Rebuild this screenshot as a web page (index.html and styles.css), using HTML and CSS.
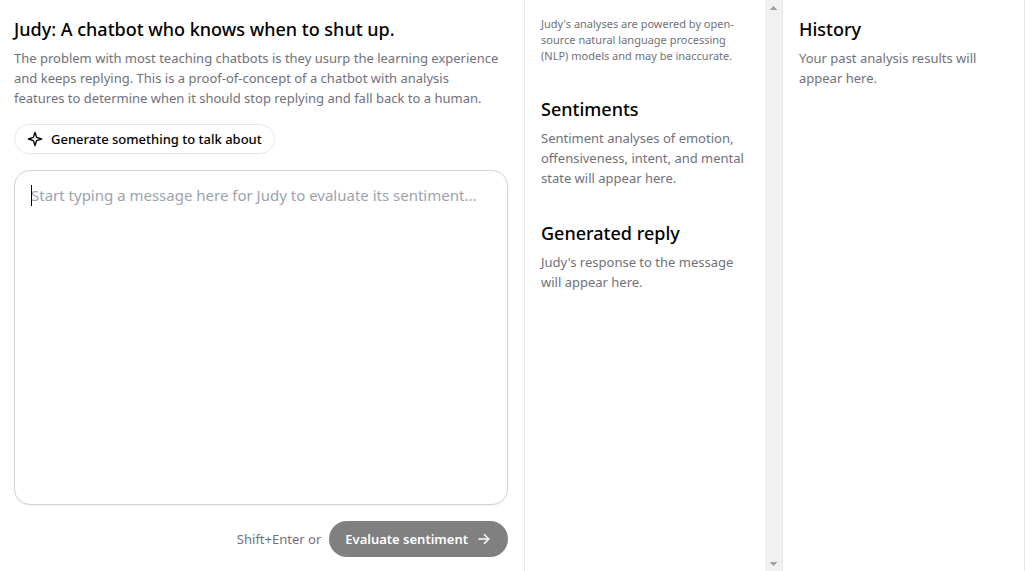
FILE: index.html
```html
<!DOCTYPE html>
<html lang="en">
<head>
<meta charset="utf-8">
<meta name="viewport" content="width=device-width, initial-scale=1">
<title>Judy</title>
<link rel="stylesheet" href="styles.css">
</head>
<body>
<div class="app">
  <main class="composer">
    <header>
      <h1 class="title">Judy: A chatbot who knows when to shut up.</h1>
      <p class="text">The problem with most teaching chatbots is they usurp the learning experience and keeps replying. This is a proof-of-concept of a chatbot with analysis<br> features to determine when it should stop replying and fall back to a human.</p>
    </header>
    <button class="generate" type="button">
      <svg class="icon" viewBox="0 0 16 16" fill="none" stroke="currentColor" stroke-width="1.4" stroke-linejoin="round" aria-hidden="true"><path d="M8 1.4 9.6 6.4 14.6 8 9.6 9.6 8 14.6 6.4 9.6 1.4 8 6.4 6.4Z"/></svg>
      Generate something to talk about
    </button>
    <div class="field">
      <textarea class="message" aria-label="Message" placeholder="Start typing a message here for Judy to evaluate its sentiment..."></textarea>
      <span class="caret"></span>
    </div>
    <div class="actions">
      <span class="hint">Shift+Enter or</span>
      <button class="submit" type="button">
        Evaluate sentiment
        <svg class="icon" viewBox="0 0 16 16" fill="none" stroke="currentColor" stroke-width="1.4" aria-hidden="true"><path d="M2.5 8H13M8 3.2 12.8 8 8 12.8"/></svg>
      </button>
    </div>
  </main>
  <section class="results">
    <div class="panel">
      <p class="note">Judy's analyses are powered by open-source natural language processing (NLP) models and may be inaccurate.</p>
      <div>
        <h2 class="title">Sentiments</h2>
        <p class="text">Sentiment analyses of emotion, offensiveness, intent, and mental state will appear here.</p>
      </div>
      <div>
        <h2 class="title">Generated reply</h2>
        <p class="text">Judy's response to the message will appear here.</p>
      </div>
    </div>
    <div class="scrollbar" aria-hidden="true">
      <svg class="arrow" viewBox="0 0 7 4" shape-rendering="crispEdges"><path d="M3 0h1v1h1v1h1v1h1v1H0V3h1V2h1V1h1z"/></svg>
      <svg class="arrow" viewBox="0 0 7 4" shape-rendering="crispEdges"><path d="M0 0h7v1H6v1H5v1H4v1H3V3H2V2H1V1H0z"/></svg>
    </div>
  </section>
  <aside class="history">
    <h2 class="title">History</h2>
    <p class="text">Your past analysis results will appear here.</p>
  </aside>
</div>
</body>
</html>
```
FILE: styles.css
```css
* { box-sizing: border-box; }
body {
  margin: 0;
  background: #fff;
  color: #000;
  font-family: "Segoe UI", "Noto Sans", sans-serif;
  font-size: 13px;
  line-height: 20px;
}
h1, h2, p { margin: 0; }
button, textarea { font: inherit; }
.app {
  display: grid;
  grid-template-columns: 525fr 258fr 242fr;
  min-height: 100vh;
}
.composer {
  display: flex;
  flex-direction: column;
  gap: 16px;
  padding: 15px 16px 14px 14px;
  border-right: 1px solid #e5e7eb;
}
.title {
  margin-bottom: 5px;
  font-size: 18px;
  font-weight: 500;
  line-height: 28px;
}
.text, .hint { color: #71717a; }
.generate {
  display: flex;
  align-items: center;
  align-self: flex-start;
  gap: 8px;
  height: 30px;
  padding: 0 12px;
  border: 1px solid #e5e7eb;
  border-radius: 15px;
  background: #fff;
  color: #000;
  font-weight: 500;
}
.icon { width: 16px; height: 16px; }
.field {
  position: relative;
  display: flex;
  flex: 1;
}
.message {
  width: 100%;
  padding: 12px 16px;
  border: 1px solid #d4d4d4;
  border-radius: 16px;
  outline: 0;
  resize: none;
  background: #fff;
  box-shadow: 0 1px 2px #0000000d;
  font-size: 15px;
  line-height: 24px;
}
.message::placeholder { color: #9ca3af; }
.caret {
  position: absolute;
  top: 15px;
  left: 17px;
  width: 1px;
  height: 21px;
  background: #000;
}
.actions {
  display: flex;
  align-items: center;
  justify-content: flex-end;
  gap: 8px;
}
.submit {
  display: flex;
  align-items: center;
  gap: 8px;
  height: 36px;
  padding: 0 16px;
  border: 0;
  border-radius: 18px;
  background: #808080;
  color: #fff;
  font-weight: 600;
}
.results {
  display: flex;
  border-right: 1px solid #e5e7eb;
}
.panel {
  display: flex;
  flex: 1;
  flex-direction: column;
  gap: 31px;
  padding: 16px;
}
.note {
  color: #71717a;
  font-size: 11px;
  line-height: 16px;
}
.scrollbar {
  display: flex;
  flex-direction: column;
  align-items: center;
  justify-content: space-between;
  width: 17px;
  padding: 6px 0 5px;
  background: #f1f1f1;
}
.arrow { width: 7px; height: 4px; fill: #a3a3a3; }
.history {
  padding: 15px 16px;
  border-right: 1px solid #e5e7eb;
}
```
